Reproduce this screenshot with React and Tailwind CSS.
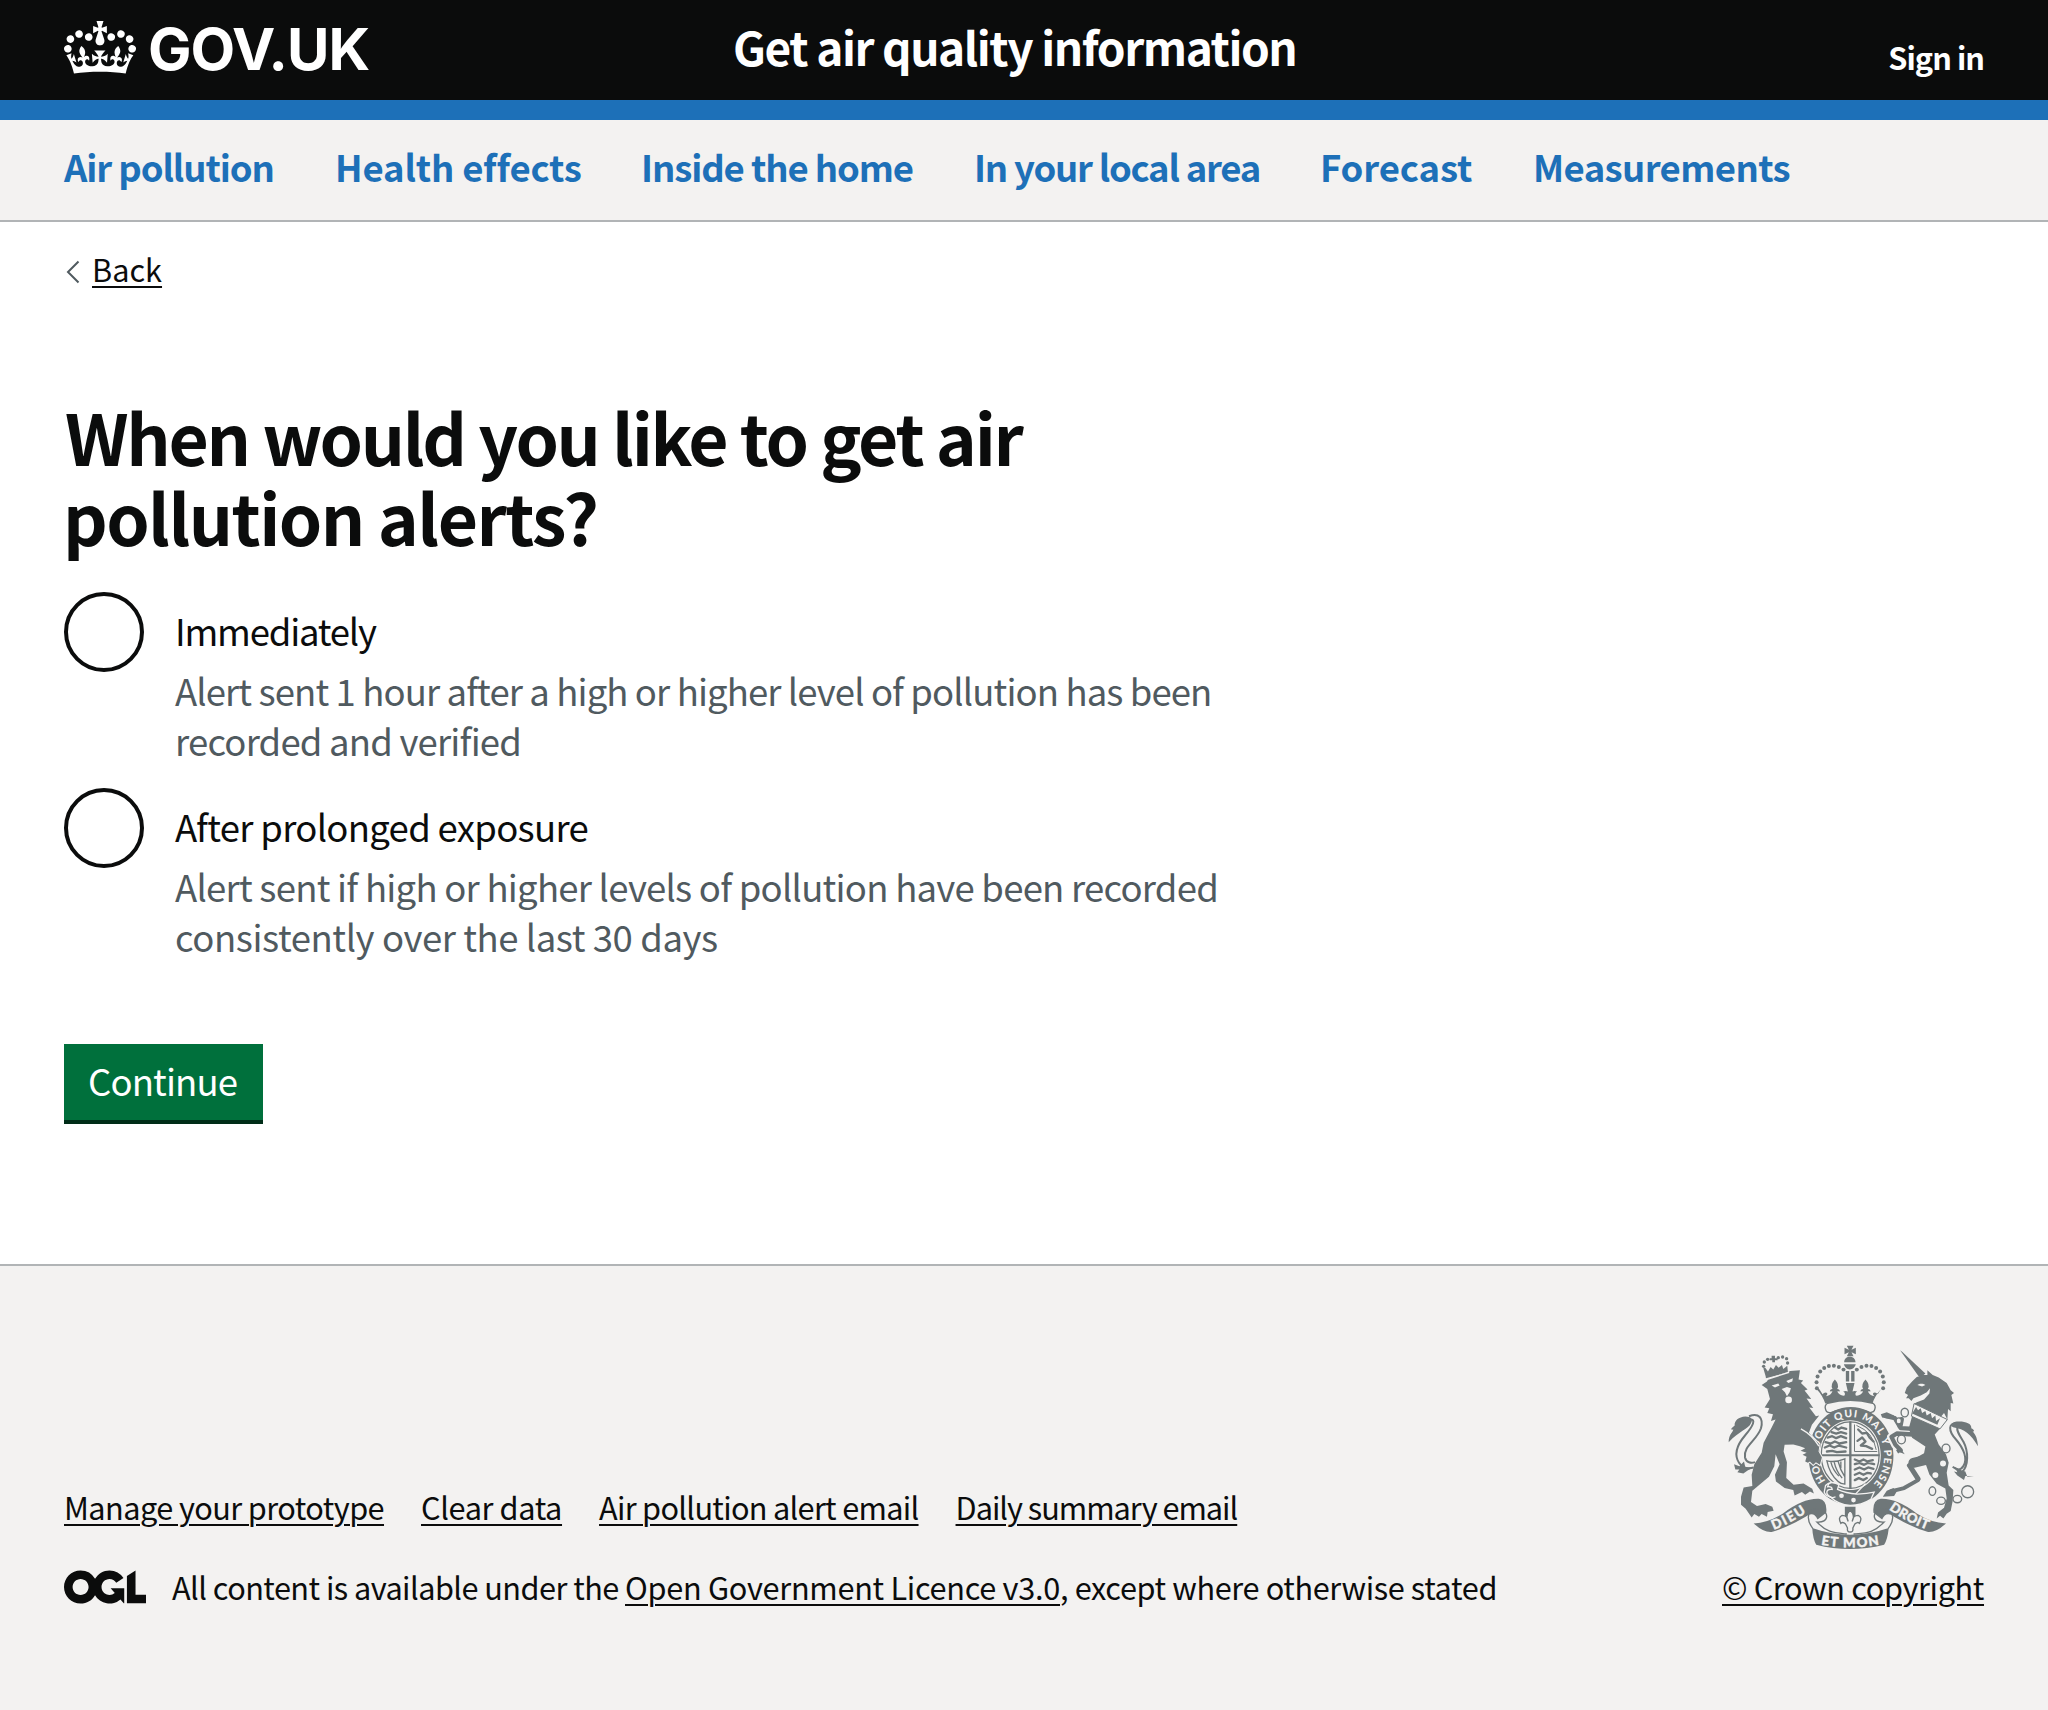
import React from "react";

const font = "font-['Noto_Sans_CJK_SC','Noto_Sans',sans-serif]";

function Crown() {
  return (
    <svg viewBox="0 0 132 97" className="mt-[21px] h-[53px] w-[72px] shrink-0" fill="currentColor" aria-hidden="true">
      <path
        fillRule="evenodd"
        d="M25 30.2c3.5 1.5 7.7-.2 9.1-3.7 1.5-3.6-.2-7.8-3.9-9.2-3.6-1.4-7.6.3-9.1 3.9-1.4 3.5.3 7.5 3.9 9zM9 39.5c3.6 1.5 7.8-.2 9.2-3.7 1.5-3.6-.2-7.8-3.9-9.1-3.6-1.5-7.6.2-9.1 3.8-1.4 3.5.3 7.5 3.8 9zM4.4 57.2c3.5 1.5 7.7-.2 9.1-3.8 1.5-3.6-.2-7.7-3.9-9.1-3.5-1.5-7.6.3-9.1 3.8-1.4 3.5.3 7.6 3.9 9.1zm38.3-21.4c3.5 1.5 7.7-.2 9.1-3.8 1.5-3.6-.2-7.7-3.9-9.1-3.6-1.5-7.6.3-9.1 3.8-1.3 3.6.4 7.7 3.9 9.1zm64.4-5.6c-3.6 1.5-7.8-.2-9.1-3.7-1.5-3.6.2-7.8 3.8-9.2 3.6-1.4 7.7.3 9.2 3.9 1.3 3.5-.4 7.5-3.9 9zm15.9 9.3c-3.6 1.5-7.7-.2-9.1-3.7-1.5-3.6.2-7.8 3.7-9.1 3.6-1.5 7.7.2 9.2 3.8 1.5 3.5-.3 7.5-3.8 9zm4.7 17.7c-3.6 1.5-7.8-.2-9.2-3.8-1.5-3.6.2-7.7 3.9-9.1 3.6-1.5 7.7.3 9.2 3.8 1.3 3.5-.4 7.6-3.9 9.1zM89.3 35.8c-3.6 1.5-7.8-.2-9.2-3.8-1.4-3.6.2-7.7 3.9-9.1 3.6-1.5 7.7.3 9.2 3.8 1.4 3.6-.3 7.7-3.9 9.1zM69.7 17.7l8.9 4.7V9.3l-8.9 2.8c-.2-.3-.5-.6-.9-.9L72.4 0H59.6l3.5 11.2c-.3.3-.6.5-.9.9l-8.8-2.8v13.1l8.8-4.7c.3.3.6.7.9.9l-5 15.4v.1c-.2.8-.4 1.6-.4 2.4 0 4.1 3.1 7.5 7 8.1h.2c.3 0 .7.1 1 .1.4 0 .7 0 1-.1h.2c4-.6 7.1-4.1 7.1-8.1 0-.8-.1-1.7-.4-2.4V34l-5.1-15.4c.4-.2.7-.6 1-.9zM66 92.8c16.9 0 32.8 1.1 47.1 3.2 4-16.9 8.9-26.7 14-33.5l-9.6-3.4c1 4.9 1.1 7.2 0 10.2-1.5-1.4-3-4.3-4.2-8.7L108.6 76c2.8-2 5-3.2 7.5-3.3-4.4 9.4-10 11.9-13.6 11.2-4.3-.8-6.3-4.6-5.6-7.9 1-4.7 5.7-5.9 8-.5 4.3-8.7-3-11.4-7.6-8.8 7.1-7.2 7.9-13.5 2.1-21.1-8 6.1-8.1 12.3-4.5 20.8-4.7-5.4-12.1-2.5-9.5 6.2 3.4-5.2 7.9-2 7.2 3.1-.6 4.3-6.4 7.8-13.5 7.2-10.3-.9-10.9-8-11.2-13.8 2.5-.5 7.1 1.8 11 7.3L80.2 60c-4.1 4.4-8 5.3-12.3 5.4 1.4-4.4 8-11.6 8-11.6H55.5s6.4 7.2 7.9 11.6c-4.2-.1-8-1-12.3-5.4l1.4 16.4c3.9-5.5 8.5-7.7 10.9-7.3-.3 5.8-.9 12.8-11.1 13.8-7.2.6-12.9-2.9-13.5-7.2-.7-5 3.8-8.3 7.1-3.1 2.7-8.7-4.6-11.6-9.4-6.2 3.7-8.5 3.6-14.7-4.6-20.8-5.8 7.6-5 13.9 2.2 21.1-4.7-2.6-11.9.1-7.7 8.8 2.3-5.5 7.1-4.2 8.1.5.7 3.3-1.3 7.1-5.7 7.9-3.5.7-9-1.8-13.5-11.2 2.5.1 4.7 1.3 7.5 3.3l-4.7-15.4c-1.2 4.4-2.7 7.2-4.3 8.7-1.1-3-.9-5.3 0-10.2l-9.5 3.4c5 6.9 9.9 16.7 14 33.5 14.8-2.1 30.8-3.2 47.7-3.2z"
      />
    </svg>
  );
}

function OglLogo() {
  return (
    <svg viewBox="0 0 483.2 195.7" className="mt-[3px] h-[34px] w-[82px] shrink-0" fill="currentColor" aria-hidden="true">
      <path d="M421.5 142.8V.1l-50.7 32.3v161.1h112.4v-50.7zm-122.3-9.6A47.12 47.12 0 0 1 221 97.8c0-26 21.1-47.1 47.1-47.1 16.7 0 31.4 8.7 39.7 21.8l42.7-27.2A97.63 97.63 0 0 0 268.1 0c-36.5 0-68.3 20.1-85.1 49.7A98 98 0 0 0 97.8 0C43.9 0 0 43.9 0 97.8s43.9 97.8 97.8 97.8c36.5 0 68.3-20.1 85.1-49.7a97.76 97.76 0 0 0 149.6 25.4l19.4 22.2h3v-87.8h-80l24.3 27.5zM97.8 145c-26 0-47.1-21.1-47.1-47.1s21.1-47.1 47.1-47.1 47.1 21.1 47.1 47.1S123.8 145 97.8 145" />
    </svg>
  );
}

function Beads({ pts, r }) {
  return pts.map(([x, y], i) => <circle key={i} cx={x} cy={y} r={r} />);
}

const INK = "#6f7779";
const PAPER = "#f3f2f1";

function Crest({ className }) {
  return (
    <svg viewBox="80 70 760 628" className={className} aria-hidden="true">
      <defs>
        <path id="garter" d="M376 484A100 116 0 1 1 512 502" />
        <path id="scroll-left" d="M220 632Q276 610 326 574" />
        <path id="scroll-right" d="M566 570Q620 608 684 632" />
        <path id="scroll-mid" d="M362 676Q450 692 540 676" />
      </defs>

      {/* royal crown */}
      <g fill={INK}>
        <path d="M440 78h20l-6 12 13-6v20l-13-6 6 12h-20l6-12-13 6v-20l13 6zM432 128c0-22 34-22 34 0zM431 134h36q-4 14-18 16-14-2-18-16zM437 154h10v32h-10zM453 154h10v32h-10z" />
        <Beads r={6} pts={[[350, 206], [349, 188], [352, 171], [360, 156], [372, 145], [386, 139], [401, 138], [416, 142], [430, 150], [549, 206], [551, 188], [548, 171], [540, 156], [528, 145], [514, 139], [499, 138], [484, 142], [470, 150]]} />
        <path d="M357 208q8 12 10 16 6-8 14-4 2 6-4 10 12 0 20-14-4-2-8 0 0-8 8-8-8-12 7-28 15 16 7 28 8 0 8 8-4-2-8 0 8 14 22 12 4-8-4-12 8-4 14 0l-6-26h26l-6 26q6-4 14 0-8 4-4 12 14 2 22-12-4-2-8 0 0-8 8-8-8-12 7-28 15 16 7 28 8 0 8 8-4-2-8 0 8 14 20 14-6-4-4-10 8-4 14 4 2-4 10-16-20 22-26 44-76-16-142 0-6-22-26-44z" />
        <path fill={PAPER} stroke={INK} strokeWidth="4" d="M382 251q-10 6-6 18 2 12 16 10 58-24 118 0 12 0 14-10 4-12-6-18-68-18-136 0z" />
      </g>

      {/* garter and shield */}
      <g fill={INK}>
        <path fillRule="evenodd" d="M452 262C524 262 580 328 580 408S528 556 452 556 325 488 325 408 380 262 452 262zM450 302C400 302 358 348 358 407S400 512 450 512 542 466 542 407 500 302 450 302z" />
        <ellipse cx="450" cy="407" rx="87" ry="100" fill="none" stroke={INK} strokeWidth="4" />
        <path d="M447 306h7v202h-7zM364 404h174v6h-174z" />
        <g fill="none" stroke={INK} strokeWidth="7" strokeLinecap="round" strokeLinejoin="round">
          <path d="M404 324l10 6 10-6 14 4M394 338l14 4 14-4 16 4M382 354l14-4 12 6 14-6 16 6M376 368l16 4 12-6 14 6 20-4M374 384l14-6 14 6 14-6 22 6M380 396l16-2 14 4 26-2M474 330l12 12 14-2 8 14 12 12M472 364l14-10 10 12-14 12 16 2 18 8M464 420l14 6 12-6 12 6 16-4M464 434l14-4 14 6 12-6 18 4M464 450l14-6 14 6 12-6 16 4M464 466l14-6 12 6 12-6 10 2M464 482l12-6 14 6 10-6" />
          <path d="M463 316V396H530" strokeWidth="3" />
          <path d="M470 318q50 20 58 72" strokeWidth="3" />
        </g>
        <g fill="none" stroke={INK} strokeWidth="4">
          <path d="M380 424q24 6 54-6v76q-12 0-20-8-26-22-34-62zM392 428q6 24 24 42M402 428q6 28 24 48M414 426q6 26 20 46M422 426v20" />
        </g>
      </g>
      <text fill={PAPER} fontFamily="Lato, sans-serif" fontWeight="900" fontSize="31" textLength="512" lengthAdjust="spacing">
        <textPath href="#garter">HONI SOIT QUI MAL Y PENSE</textPath>
      </text>
      <path fill={INK} stroke={PAPER} strokeWidth="4" d="M376 498q14-16 40-2l-4 14q24 12 60 14 30-2 50-6l-10 22q-28 18-62 18-36-2-60-26-14-2-18-14z" />
      <path fill="none" stroke={PAPER} strokeWidth="4" d="M410 492q-24-10-28 10 14-2 14 8-18-2-16 12 10 18 26 10M466 524l30-32" />
      <g fill={PAPER}>
        <circle cx="424" cy="529" r="7" />
        <circle cx="460" cy="542" r="7" />
      </g>

      {/* lion */}
      <path
        fill={INK}
        stroke={PAPER}
        strokeWidth="6"
        paintOrder="stroke"
        d="M184 196l16-10 4-8 58-20 8-4 29-2-4 28 14 3-7 7 20 20-9 3 20 25-14-1 20 28-12-1 20 26 10-2-22 28-9 24 14 16 18 18-3 22 10 18-6 22-12-8-8 8-10-10-6 4-8-4 4-14-12-6 12-6-18-6 14-8-16-6-20-5-26 1-3 20 10 32-2 48 22 20 30-4 26 16 5 14-12-6-14 10-10-8-22 10-4-16-26-6-26-20-3-20 14-32-12-30-4 36-16 32-50 42-4 34 18 12 26-6 20 8 4 12-18 4-2 14-16-8-8 8-14-8-8 10-18-26-14-12 0-24 8-28 26-4-2-34 8-32 22-34 6-30 24-46 12-24-14 4 6-20-17-4 6-14-14-2 16-26-8-30z"
      />
      <path fill="none" stroke={PAPER} strokeWidth="4" d="M302 328Q336 346 356 380" />
      <path fill="none" stroke={INK} strokeWidth="6" d="M146 290C176 278 190 296 182 326 170 362 128 380 134 414 138 430 152 432 164 428M146 300C170 296 158 320 134 348 112 374 98 402 116 430 128 448 146 448 160 444" />
      <g fill={INK}>
        <path d="M85 368c0-22 10-26 14-38-10 2-8-2 4-12-2-14 12-26 32-27 20 0 24 10 16 22-6 14-34 22-66 55zM101 434l16 6 14-14 4 18 26 0-18 8-14 10-18-4 6-8-12 0z" />
        <path d="M196 170l-7-24 6-2 8 12 8-14 8 8 8-14 8 8 10-8 4 12 12-10 2 20-66 18zM214 108h10v8h8v6h-8v6h-8v-6h-8v-6h6z" />
        <Beads r={5} pts={[[190, 140], [192, 127], [202, 119], [234, 114], [247, 112], [259, 117], [262, 130]]} />
      </g>
      <g fill={PAPER}>
        <path d="M214 198l20-6 4 6-14 6zM258 184l20-8-2 10-12 4zM244 208l16-6 12 4-4 12-8 12-6-12z" />
        <circle cx="265" cy="241" r="10" />
        <path d="M198 178l68-22 1 4-68 22z" />
      </g>

      {/* unicorn */}
      <g fill={INK}>
        <g fill="none" stroke={INK} strokeLinejoin="round" strokeLinecap="round">
          <path strokeWidth="22" stroke={PAPER} d="M640 330L600 326 584 296 560 288M640 345L590 342 572 352 584 376 604 392" />
          <path strokeWidth="13" d="M640 328L602 326 584 296 558 290M640 345L590 342 574 352 586 376 602 392" />
          <path strokeWidth="15" d="M604 300L600 320M628 438L654 478" />
          <path strokeWidth="12" d="M654 482L612 506 572 516" />
          <path strokeWidth="30" d="M690 418L640 430" />
        </g>
        <path d="M546 294l-4-10 18-6 22 10-4 10-20-2zM588 392l10-10 16 22-14-6-6 4zM548 532l12-18 20-8 10 10-8 14z" />
        <path d="M600 92l6 4 70 66-14 12-8-6z" />
        <path d="M682 152l16 14 18 8 24 16 12 22 10 8-8 6 6 26-8-2 0 25-8-7-2 32-10-20-10 12-82-38 10-6 22-8 16-18 2-16-10 12-18 10-22 8-6 8-8-8-8 0 6-10-10-6 6-16 16-18 14-14 18-6 14 0z" />
        <path d="M636 290l84 38-16 17 12 30 22 30 8 25-6 30 6 38 14 14-2 33-6 30-12 8-10 14-10-8-10 8 4-18 18-14 8-28-4-30-26-14-22-28-14-40-30-8 28-16 4-20-40-26-10-28z" />
      </g>
      <g fill={PAPER}>
        <path d="M642 252l100 48-22 28-86-38z" stroke={INK} strokeWidth="3" />
        <path d="M652 196c8-6 18-4 24 0l-10 5z" />
        <circle cx="729" cy="432" r="9" />
        <circle cx="706" cy="467" r="9" />
      </g>
      <path fill={INK} d="M648 262l6 10 8-6 4 14 10-6 4 14 12-8 4 16 10-8 2 16 12-8-8 20-76-34z" />
      <g fill={PAPER} stroke={INK} strokeWidth="4">
        <ellipse cx="614" cy="279" rx="11" ry="13" />
        <ellipse cx="596" cy="304" rx="8" ry="9" />
        <ellipse cx="604" cy="360" rx="12" ry="13" />
        <ellipse cx="738" cy="387" rx="12" ry="13" />
        <ellipse cx="697" cy="515" rx="10" ry="13" />
        <ellipse cx="723" cy="544" rx="13" ry="11" />
        <ellipse cx="772" cy="539" rx="13" ry="11" />
        <circle cx="803" cy="517" r="18" />
      </g>
      <path fill="none" stroke={INK} strokeWidth="6" d="M772 312C744 308 744 334 768 360 792 388 804 420 790 440 780 456 768 450 758 442M774 322C766 330 780 350 790 366 806 396 806 440 786 458" />
      <path fill={INK} d="M834 380c-2-22-6-34-16-44 8 0 4-6-4-10 2-16-22-22-44-20-20 4-20 14-8 18 30 4 50 20 72 56zM822 470l-20 2-6-16-12-4-20-10 8 16-10-2 10 12 20 14 4-12z" />

      {/* motto scroll */}
      <g fill={INK}>
        <path d="M160 612Q204 610 248 582 308 536 356 538 382 542 378 580L352 600Q340 574 316 592 262 624 214 638 190 640 160 612zM738 612Q694 610 650 582 590 536 542 538 516 542 520 580L546 600Q558 574 582 592 636 624 684 638 708 640 738 612zM336 626q112 40 230 0-4 36-14 50-104 26-204 0-10-16-12-50z" />
        <path fill="none" stroke={INK} strokeWidth="4" d="M338 628C310 590 330 560 360 570 390 582 384 610 350 608 380 640 400 640 440 644M564 628C592 590 572 560 542 570 512 582 518 610 552 608 522 640 502 640 460 644" />
        <path d="M434 562h32v28h-32z" />
      </g>
      <path fill={PAPER} stroke={INK} strokeWidth="4" d="M450 572q16 16 6 34 2-18 18-18 14 6 4 24-6-6-14 2l-6 12q2 12-8 12t-8-12l-6-12q-8-8-14-2-10-18 4-24 16 0 18 18-10-18 6-34z" />
      <g fill={PAPER} stroke={PAPER} strokeWidth="1.2" fontFamily="Lato, sans-serif" fontWeight="900" fontSize="40">
        <text textLength="112"><textPath href="#scroll-left">DIEU</textPath></text>
        <text textLength="130"><textPath href="#scroll-right">DROIT</textPath></text>
        <text textLength="176"><textPath href="#scroll-mid">ET MON</textPath></text>
      </g>
    </svg>
  );
}

const nav = [
  ["Air pollution", "w-[271px] tracking-[-1.1px]"],
  ["Health effects", "w-[306px] tracking-[-0.17px]"],
  ["Inside the home", "w-[333px] tracking-[-1.1px]"],
  ["In your local area", "w-[346px] tracking-[-1.25px]"],
  ["Forecast", "w-[213px] tracking-[-0.1px]"],
  ["Measurements", "tracking-[-0.6px]"],
];

const options = [
  {
    label: "Immediately",
    tracking: "tracking-[-1.2px]",
    hint: [
      ["Alert sent 1 hour after a high or higher level of pollution has been", "tracking-[-0.895px]"],
      ["recorded and verified", "tracking-[-0.8px]"],
    ],
  },
  {
    label: "After prolonged exposure",
    tracking: "tracking-[-0.7px]",
    hint: [
      ["Alert sent if high or higher levels of pollution have been recorded", "tracking-[-0.755px]"],
      ["consistently over the last 30 days", "tracking-[-0.43px]"],
    ],
  },
];

const footerLinks = [
  ["Manage your prototype", "tracking-[-0.576px]"],
  ["Clear data", "tracking-[-0.381px]"],
  ["Air pollution alert email", "tracking-[-0.698px]"],
  ["Daily summary email", "tracking-[-1.017px]"],
];

const link = "underline decoration-2 underline-offset-[4px]";

export default function App() {
  return (
    <div className={`flex min-h-[1710px] flex-col whitespace-nowrap bg-white text-[#0b0c0c] ${font}`}>
      <header className="flex h-[120px] items-start border-b-[20px] border-[#1d70b8] bg-[#0b0c0c] px-16 font-bold text-white">
        <a href="#" className="flex w-[669px] items-start">
          <Crown />
          <span className="mt-[20px] ml-[12px] font-['Inter',sans-serif] text-[58px] leading-[58px] tracking-[-1px]">GOV.UK</span>
        </a>
        <a href="#" className="mt-[16px] text-[46px] leading-[60px] tracking-[-1.454px]">Get air quality information</a>
        <a href="#" className="mt-[37px] ml-auto text-[30.7px] leading-[40px] tracking-[-0.961px]">Sign in</a>
      </header>

      <nav className="flex h-[102px] border-b-2 border-[#b1b4b6] bg-[#f3f2f1] pt-[22px] pl-16 text-[36.5px] leading-[50px] font-bold text-[#1d70b8]">
        {nav.map(([label, cls]) => (
          <a key={label} href="#" className={`block shrink-0 ${cls}`}>{label}</a>
        ))}
      </nav>

      <main className="px-16 pt-[27px]">
        <a href="#" className="flex h-[40px] items-center text-[30.7px] leading-[40px]">
          <svg viewBox="0 0 14 24" className="mt-[6px] ml-[2px] h-6 w-[14px]" fill="none" stroke="#505a5f" strokeWidth="2" aria-hidden="true">
            <path d="M12.5 1.5L2 12l10.5 10.5" />
          </svg>
          <span className={`ml-[12px] ${link}`}>Back</span>
        </a>

        <h1 className="mt-[107px] text-[69.5px] leading-[80px] font-bold">
          <span className="ml-px block tracking-[-2.28px]">When would you like to get air</span>
          <span className="-ml-px block tracking-[-1.572px]">pollution alerts?</span>
        </h1>

        <div className="mt-[36px] flex flex-col gap-[20px]">
          {options.map((o) => (
            <label key={o.label} className="flex h-[176px] items-start">
              <input type="radio" name="when" className="size-20 shrink-0 appearance-none rounded-full border-4 border-[#0b0c0c]" />
              <span className="mt-[14px] ml-[31px] text-[36.5px] leading-[50px]">
                <span className={`block ${o.tracking}`}>{o.label}</span>
                <span className="mt-[10px] block text-[#505a5f]">
                  {o.hint.map(([t, cls]) => (
                    <span key={t} className={`block ${cls}`}>{t}</span>
                  ))}
                </span>
              </span>
            </label>
          ))}
        </div>

        <button type="button" className="mt-[80px] block h-[80px] w-[199px] border-b-4 border-[#002d18] bg-[#00703c] pb-[2px] pl-[24px] text-left text-[36.5px] leading-[74px] tracking-[-0.884px] text-white">
          Continue
        </button>
      </main>

      <footer className="mt-[140px] flex flex-1 justify-between border-t-2 border-[#b1b4b6] bg-[#f3f2f1] px-16 pt-[77px] text-[30.7px] leading-[40px]">
        <div className="pt-[144px]">
          <div className="flex gap-[37px]">
            {footerLinks.map(([t, cls]) => (
              <a key={t} href="#" className={`${link} ${cls}`}>{t}</a>
            ))}
          </div>
          <div className="mt-[40px] flex items-start">
            <OglLogo />
            <p className="ml-[26px]">
              <span className="tracking-[-0.549px]">All content is available under the </span>
              <a href="#" className={`tracking-[-0.292px] ${link}`}>Open Government Licence v3.0</a>
              <span className="tracking-[-0.383px]">, except where otherwise stated</span>
            </p>
          </div>
        </div>
        <a href="#" className="block w-[262px]">
          <Crest className="ml-[5px] h-[209px] w-[253px]" />
          <span className={`mt-[15px] block tracking-[-0.381px] ${link}`}>© Crown copyright</span>
        </a>
      </footer>
    </div>
  );
}
